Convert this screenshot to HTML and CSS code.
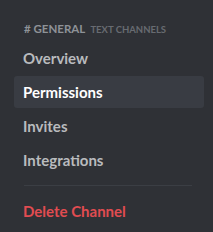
FILE: index.html
```html
<!DOCTYPE html>
<html lang="en">

<head>
    <meta charset="UTF-8">
    <title>Channel Settings</title>
    <link rel="stylesheet" href="styles.css">
</head>

<body>
    <div class="sidebar">
        <div class="header">
            <span class="channel-name"># General</span>
            <span class="category">Text Channels</span>
        </div>
        <div class="item">Overview</div>
        <div class="item selected">Permissions</div>
        <div class="item">Invites</div>
        <div class="item">Integrations</div>
        <div class="divider"></div>
        <div class="item danger">Delete Channel</div>
    </div>
</body>

</html>
```

FILE: styles.css
```css
body {
    margin: 0;
    background-color: #2f3136;
    font-family: Lato, "Open Sans", sans-serif;
}

.sidebar {
    width: 190px;
    padding: 17px 0 0 14px;
}

.header {
    padding: 0 10px;
    height: 25px;
    text-transform: uppercase;
    white-space: nowrap;
}

.channel-name {
    font-size: 11.5px;
    font-weight: 700;
    color: #8e9297;
}

.category {
    font-size: 9.5px;
    font-weight: 700;
    color: #686b71;
    margin-left: 1px;
}

.item {
    height: 32px;
    line-height: 32px;
    padding: 0 9px;
    margin-bottom: 2px;
    border-radius: 3px;
    font-size: 15px;
    font-weight: 700;
    color: #b9bbbe;
}

.selected {
    background-color: #393c43;
    color: #ffffff;
}

.danger {
    color: #e14c51;
}

.divider {
    height: 1px;
    margin: 9px 12px 9px 10px;
    background-color: #3b3e44;
}
```
